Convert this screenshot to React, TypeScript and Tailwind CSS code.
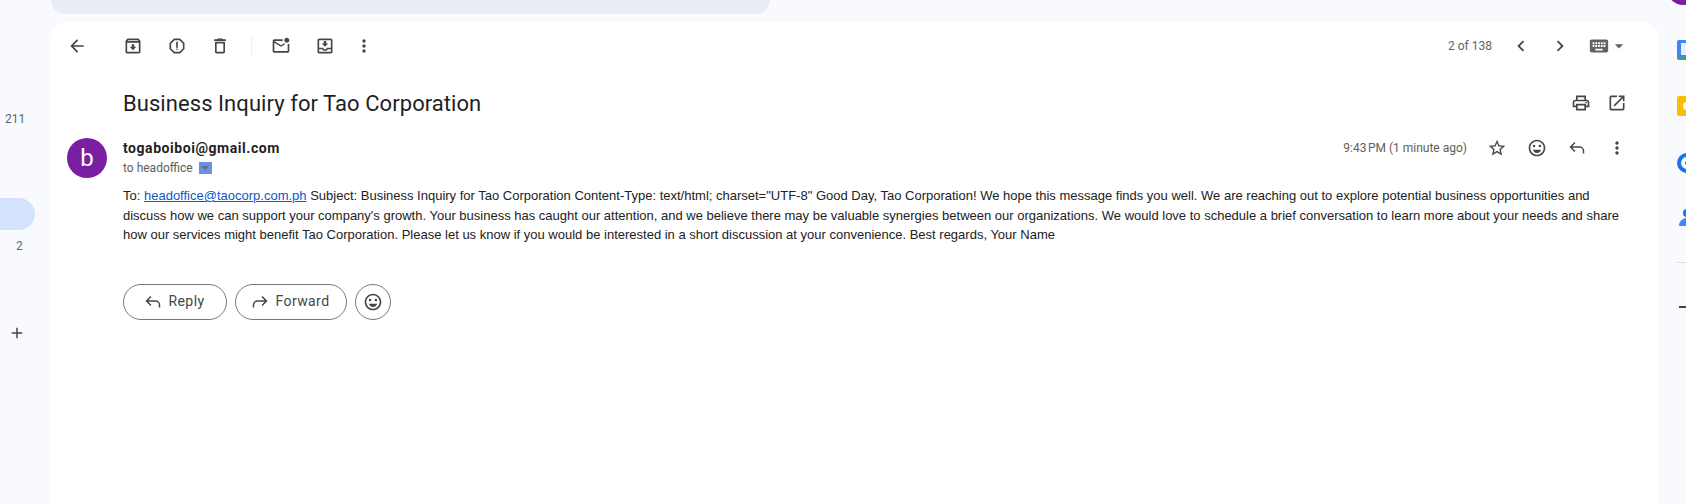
import React from 'react';
import {
    MdArrowBack,
    MdArrowDropDown,
    MdChevronLeft,
    MdChevronRight,
    MdKeyboard,
    MdMoreVert,
    MdOpenInNew,
    MdOutlineArchive,
    MdOutlineDelete,
    MdOutlineEmojiEmotions,
    MdOutlineMarkEmailUnread,
    MdOutlineMoveToInbox,
    MdOutlinePrint,
    MdOutlineReport,
    MdStarBorder,
    MdAdd,
} from 'react-icons/md';

const ReplyIcon: React.FC<{ flip?: boolean }> = ({ flip }) => (
    <svg width="20" height="20" viewBox="0 0 20 20" fill="none" stroke="#444746" strokeWidth="1.5" className={flip ? '-scale-x-100' : ''}>
        <path d="M8 4.5 L3.5 9 L8 13.5 M3.5 9 H12.5 a4 4 0 0 1 4 4 V15.5" />
    </svg>
);

const IconBtn: React.FC<{ children: React.ReactNode; className?: string }> = ({ children, className }) => (
    <button className={`w-10 h-10 flex items-center justify-center text-[#444746] shrink-0 ${className ?? ''}`}>{children}</button>
);

const LeftRail = () => (
    <div className="w-[51px] shrink-0 flex flex-col text-[12px] text-[#5f6368]">
        <div className="h-[236px] pt-[111px] pl-[5px] leading-4">211</div>
        <div className="-mt-[38px] h-[32px] w-[35px] rounded-r-full bg-[#d3e3fd]" />
        <div className="mt-2 pl-[16px] leading-4">2</div>
        <div className="mt-[70px] pl-[8px] text-[#444746]">
            <MdAdd size={18} />
        </div>
    </div>
);

const RightRail = () => (
    <div className="w-[27px] shrink-0 overflow-hidden flex flex-col">
        <div className="-mt-[27px] ml-[8px] w-8 h-8 rounded-full bg-[#7b1fa2] shrink-0" />
        <div className="mt-[35px] ml-[18px] w-5 h-5 shrink-0 rounded-[2px] bg-[#4285f4] border-b-[3px] border-b-[#34a853] flex items-center justify-center">
            <div className="w-3 h-3 bg-[#e8f0fe]" />
        </div>
        <div className="mt-[36px] ml-[18px] w-5 h-5 shrink-0 rounded-[2px] bg-[#fbbc04] flex items-center justify-center">
            <div className="w-2 h-2 rounded-full bg-white" />
        </div>
        <div className="mt-[37px] ml-[18px] w-5 h-5 shrink-0 rounded-full border-[4px] border-[#1a73e8] flex items-center justify-center">
            <div className="w-1 h-1 rounded-full bg-[#1a73e8]" />
        </div>
        <div className="mt-[36px] ml-[18px] w-5 h-5 shrink-0 flex flex-col items-center">
            <div className="w-2 h-2 rounded-full bg-[#1a73e8]" />
            <div className="w-4 h-2 mt-px rounded-t-full bg-[#4285f4]" />
        </div>
        <div className="mt-[33px] ml-[18px] h-px bg-[#dadce0] shrink-0" />
        <div className="mt-[43px] ml-[20px] h-[2px] bg-[#444746] shrink-0" />
    </div>
);

const App: React.FC = () => {
    return (
        <div className="h-[504px] w-[1686px] overflow-hidden flex bg-[#f8fafd] font-['Roboto',sans-serif]">
            <LeftRail />
            <div className="flex-1 flex flex-col min-w-0">
                <div className="h-[14px] w-[719px] bg-[#e9eef6] rounded-b-[20px] shrink-0" />
                <div className="mt-2 flex-1 bg-white rounded-t-2xl flex flex-col">
                    <div className="flex items-center pt-1 pl-[6px] pr-[30px] h-11 shrink-0">
                        <IconBtn><MdArrowBack size={20} /></IconBtn>
                        <IconBtn className="ml-4"><MdOutlineArchive size={20} /></IconBtn>
                        <IconBtn className="ml-1"><MdOutlineReport size={20} /></IconBtn>
                        <IconBtn className="ml-[3px]"><MdOutlineDelete size={20} /></IconBtn>
                        <div className="w-px h-5 bg-[#eceff1] ml-[11px] mr-[9px]" />
                        <IconBtn><MdOutlineMarkEmailUnread size={20} /></IconBtn>
                        <IconBtn className="ml-1"><MdOutlineMoveToInbox size={20} /></IconBtn>
                        <IconBtn className="-ml-px"><MdMoreVert size={20} /></IconBtn>
                        <div className="ml-auto flex items-center">
                            <span className="text-[12px] text-[#5f6368] mr-[9px]">2 of 138</span>
                            <IconBtn><MdChevronLeft size={22} /></IconBtn>
                            <IconBtn className="-ml-px"><MdChevronRight size={22} /></IconBtn>
                            <div className="flex items-center text-[#5f6368] ml-[8px]">
                                <MdKeyboard size={22} />
                                <MdArrowDropDown size={20} className="-ml-px" />
                            </div>
                        </div>
                    </div>
                    <div className="flex items-center mt-[17px] h-10 pl-[72px] pr-[22px] shrink-0">
                        <h1 className="text-[22px] font-normal text-[#1f1f1f] tracking-[0.06px] flex-1">Business Inquiry for Tao Corporation</h1>
                        <IconBtn className="-mr-1"><MdOutlinePrint size={20} /></IconBtn>
                        <IconBtn><MdOpenInNew size={20} /></IconBtn>
                    </div>
                    <div className="flex mt-[15px] pl-4 pr-[22px] shrink-0">
                        <div className="w-10 h-10 rounded-full bg-[#7b1fa2] text-white text-[24px] font-normal flex items-center justify-center shrink-0">b</div>
                        <div className="ml-[16px] flex-1">
                            <div className="text-[14px] leading-5 font-bold text-[#1f1f1f] tracking-[0.55px]">togaboiboi@gmail.com</div>
                            <div className="text-[12px] leading-5 text-[#5e5e5e] flex items-center">
                                to headoffice
                                <span className="ml-[6px] w-[13px] h-3 bg-[#6d92dd] flex items-center justify-center">
                                    <span className="w-0 h-0 border-x-[4px] border-x-transparent border-t-[4px] border-t-[#5f6f91]" />
                                </span>
                            </div>
                        </div>
                        <div className="flex items-start -mt-[10px]">
                            <span className="text-[12px] text-[#5e5e5e] mt-[11px] mr-[10px]">9:43{'\u202f'}PM (1 minute ago)</span>
                            <IconBtn><MdStarBorder size={20} /></IconBtn>
                            <IconBtn><MdOutlineEmojiEmotions size={20} /></IconBtn>
                            <IconBtn><ReplyIcon /></IconBtn>
                            <IconBtn><MdMoreVert size={20} /></IconBtn>
                        </div>
                    </div>
                    <p className="mt-2 ml-[72px] mr-[36px] text-[13px] leading-[19.5px] text-[#222222] font-['Liberation_Sans',Arial,sans-serif]">
                        To: <a className="text-[#1155cc] underline">headoffice@taocorp.com.ph</a> Subject: Business Inquiry for Tao Corporation Content-Type: text/html; charset="UTF-8" Good Day, Tao Corporation! We hope this message finds you well. We are reaching out to explore potential business opportunities and discuss how we can support your company's growth. Your business has caught our attention, and we believe there may be valuable synergies between our organizations. We would love to schedule a brief conversation to learn more about your needs and share how our services might benefit Tao Corporation. Please let us know if you would be interested in a short discussion at your convenience. Best regards, Your Name
                    </p>
                    <div className="flex gap-2 mt-[39px] ml-[72px] text-[14px] font-normal tracking-[0.4px] text-[#444746]">
                        <button className="w-[104px] h-9 pr-[3px] rounded-full border border-[#747775] flex items-center justify-center gap-[6px]">
                            <ReplyIcon />
                            Reply
                        </button>
                        <button className="w-[112px] h-9 pr-[3px] rounded-full border border-[#747775] flex items-center justify-center gap-[6px]">
                            <ReplyIcon flip />
                            Forward
                        </button>
                        <button className="w-9 h-9 rounded-full border border-[#747775] flex items-center justify-center">
                            <MdOutlineEmojiEmotions size={20} />
                        </button>
                    </div>
                </div>
            </div>
            <RightRail />
        </div>
    );
};

export default App;
